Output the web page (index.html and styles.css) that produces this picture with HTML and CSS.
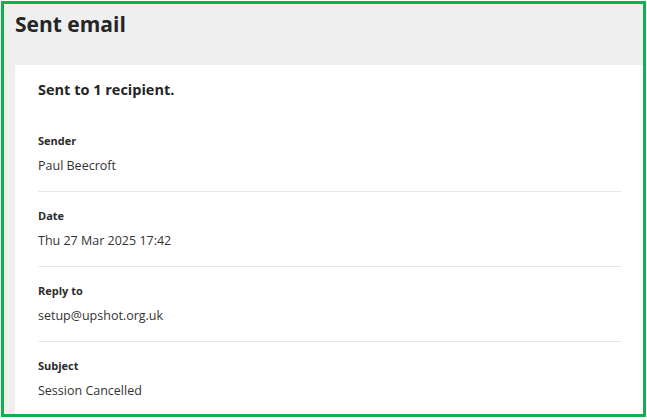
FILE: index.html
```html
<!DOCTYPE html>
<html lang="en">
<head>
    <meta charset="UTF-8">
    <title>Sent email</title>
    <link rel="stylesheet" href="styles.css">
</head>
<body>
    <div class="frame">
        <div class="page-header">
            <h1 class="page-title">Sent email</h1>
        </div>

        <div class="email-card">
            <p class="summary">Sent to 1 recipient.</p>

            <div class="field">
                <div class="field-label">Sender</div>
                <div class="field-value">Paul Beecroft</div>
            </div>
            <div class="field">
                <div class="field-label">Date</div>
                <div class="field-value">Thu 27 Mar 2025 17:42</div>
            </div>
            <div class="field">
                <div class="field-label">Reply to</div>
                <div class="field-value">setup@upshot.org.uk</div>
            </div>
            <div class="field">
                <div class="field-label">Subject</div>
                <div class="field-value">Session Cancelled</div>
            </div>
        </div>
    </div>
</body>
</html>
```

FILE: styles.css
```css
* {
    margin: 0;
    padding: 0;
    box-sizing: border-box;
}

body {
    font-family: 'Open Sans', 'Noto Sans', sans-serif;
    background-color: #ffffff;
    color: #2b2b2b;
    overflow: hidden;
}

.frame {
    margin: 1px;
    width: 645px;
    height: 416px;
    border: 3px solid #12b04d;
    background-color: #efefef;
    display: flex;
    flex-direction: column;
    overflow: hidden;
}

.page-header {
    flex-shrink: 0;
    height: 61px;
    padding: 5px 11px 0;
}

.page-title {
    font-size: 21px;
    font-weight: 700;
    line-height: 30px;
    color: #252525;
}

.email-card {
    flex: 1 0 auto;
    margin-left: 11px;
    background-color: #ffffff;
    padding: 13px 22px 0 23px;
}

.summary {
    font-size: 14.5px;
    font-weight: 700;
    line-height: 24px;
    color: #252525;
    margin-bottom: 29px;
}

.field {
    padding-bottom: 14px;
    border-bottom: 1px solid #e6e6e6;
    margin-bottom: 14px;
}

.field-label {
    font-size: 11px;
    font-weight: 700;
    line-height: 20px;
    margin-bottom: 4px;
}

.field-value {
    font-size: 12.5px;
    line-height: 22px;
    color: #333333;
}
```
